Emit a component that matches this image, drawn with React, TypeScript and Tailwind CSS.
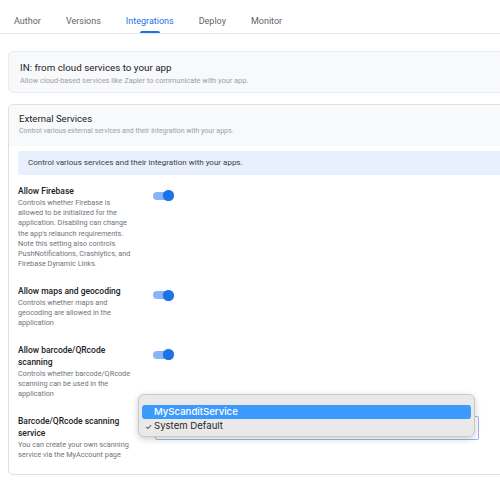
import { useState } from "react";

const tabs = ["Author", "Versions", "Integrations", "Deploy", "Monitor"];

type Service = {
  title: string;
  description: string;
};

const toggles: Service[] = [
  {
    title: "Allow Firebase",
    description:
      "Controls whether Firebase is allowed to be initialized for the application. Disabling can change the app's relaunch requirements. Note this setting also controls PushNotifications, Crashlytics, and Firebase Dynamic Links.",
  },
  {
    title: "Allow maps and geocoding",
    description:
      "Controls whether maps and geocoding are allowed in the application",
  },
  {
    title: "Allow barcode/QRcode scanning",
    description:
      "Controls whether barcode/QRcode scanning can be used in the application",
  },
];

export default function App() {
  const [active] = useState("Integrations");
  const [enabled, setEnabled] = useState([true, true, true]);

  return (
    <div className="h-[484px] w-[500px] overflow-hidden bg-white font-['Roboto',sans-serif]">
      <nav className="flex h-[34px] items-stretch gap-[25px] border-b border-[#e8eaed] pl-[14px]">
        {tabs.map((tab) => (
          <div
            key={tab}
            className={`relative flex items-center pt-[11px] text-[9px] ${
              tab === active ? "text-[#1a73e8]" : "text-[#5f6368]"
            }`}
          >
            {tab}
            {tab === active && (
              <span className="absolute bottom-[0px] left-1/2 h-[2px] w-[20px] -translate-x-1/2 rounded-t bg-[#1a73e8]" />
            )}
          </div>
        ))}
      </nav>

      <div className="w-[560px] pl-2">
        <section className="mt-[17px] h-[42px] rounded-[5px] border border-[#e8eaed] bg-[#f8f9fa] px-[11px] pt-[9px]">
          <h2 className="text-[9.8px] leading-[13px] text-[#202124]">
            IN: from cloud services to your app
          </h2>
          <p className="mt-[2px] text-[7.4px] leading-[10px] text-[#9aa0a6]">
            Allow cloud-based services like Zapier to communicate with your app.
          </p>
        </section>

        <section className="mt-[11px] h-[371px] rounded-[5px] border border-[#e0e0e0] bg-white">
          <header className="h-[41px] rounded-t-[5px] bg-[#f8f9fa] px-[10px] pt-[8px]">
            <h2 className="text-[9.6px] leading-[12px] text-[#202124]">
              External Services
            </h2>
            <p className="mt-[1px] text-[7px] leading-[10px] text-[#9aa0a6]">
              Control various external services and their integration with your apps.
            </p>
          </header>

          <div className="ml-[9px] mt-[5px] flex h-[24px] items-center rounded-[3px] bg-[#e8f0fe] pl-[10px] text-[8px] text-[#3c4043]">
            Control various services and their integration with your apps.
          </div>

          <div className="mt-[10px] flex flex-col gap-[15.5px] pl-[9px]">
            {toggles.map((item, i) => (
              <div key={item.title} className="flex">
                <Label title={item.title} description={item.description} />
                <Toggle
                  on={enabled[i]}
                  onChange={() =>
                    setEnabled((current) =>
                      current.map((value, index) => (index === i ? !value : value)),
                    )
                  }
                />
              </div>
            ))}

            <div className="flex">
              <Label
                title="Barcode/QRcode scanning service"
                description="You can create your own scanning service via the MyAccount page"
              />
              <div className="relative ml-[12px] mt-[1px] h-[24px] w-[324px] rounded-[2px] border border-[#9ab8ec]">
                <ScanServiceMenu />
              </div>
            </div>
          </div>
        </section>
      </div>
    </div>
  );
}

function Label({ title, description }: { title: string; description: string }) {
  return (
    <div className="w-[125px] pr-[8px]">
      <div className="text-[8.5px] font-medium leading-[12px] text-[#202124]">
        {title}
      </div>
      <p className="mt-[1px] text-[7.3px] leading-[10.2px] text-[#70757a]">
        {description}
      </p>
    </div>
  );
}

function Toggle({ on, onChange }: { on: boolean; onChange: () => void }) {
  return (
    <button
      type="button"
      onClick={onChange}
      className="relative ml-[10px] mt-[5px] h-[11px] w-[21px] shrink-0"
    >
      <span
        className={`absolute left-0 top-[1.5px] h-[8px] w-[16px] rounded-full ${
          on ? "bg-[#8ab4f8]" : "bg-[#bdc1c6]"
        }`}
      />
      <span
        className={`absolute top-0 h-[11px] w-[11px] rounded-full shadow-[0_0_1px_rgba(0,0,0,0.3)] ${
          on ? "left-[10px] bg-[#1a73e8]" : "left-0 bg-white"
        }`}
      />
    </button>
  );
}

// native-style popup that the select opens over itself
function ScanServiceMenu() {
  return (
    <div className="absolute left-[-18px] top-[-23px] h-[43px] w-[337px] rounded-[6px] border border-[#c9c9c9] bg-[#e9e9e9] px-[3px] pt-[10px] font-['Inter',sans-serif] shadow-[0_2px_6px_rgba(0,0,0,0.2)]">
      <div className="flex h-[14px] items-center rounded-[3px] bg-[#3d9afd] pl-[12px] text-[9.6px] font-medium text-white">
        MyScanditService
      </div>
      <div className="flex h-[15px] items-center text-[9.6px] text-[#262626]">
        <span className="w-[12px] pl-[3px] text-[8px]">✓</span>
        System Default
      </div>
    </div>
  );
}
